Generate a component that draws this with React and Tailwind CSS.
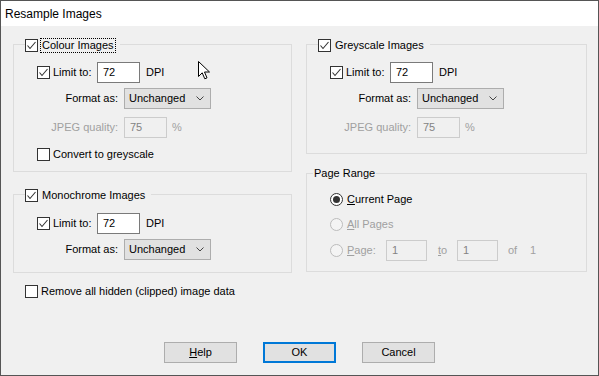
import React from "react";

function Check({ checked }) {
  return (
    <span className="relative inline-block w-[13px] h-[13px] shrink-0 border border-[#333333] bg-white">
      {checked && (
        <svg width="11" height="11" viewBox="0 0 11 11" className="absolute left-0 top-0">
          <polyline points="1.5,5.5 4,8.5 9.5,2" fill="none" stroke="#333333" strokeWidth="1.1" />
        </svg>
      )}
    </span>
  );
}

function Radio({ checked, disabled }) {
  return (
    <span
      className={
        "relative inline-flex items-center justify-center w-[13px] h-[13px] shrink-0 rounded-full border " +
        (disabled ? "border-[#bcbcbc] bg-[#f4f4f4]" : "border-[#333333] bg-white")
      }
    >
      {checked && <span className="block w-[7px] h-[7px] rounded-full bg-[#333333]" />}
    </span>
  );
}

function Input({ value, disabled, w = "w-[43px]" }) {
  return (
    <div
      className={
        "h-[21px] " + w + " flex items-center pl-[5px] border " +
        (disabled ? "border-[#cccccc] bg-[#f0f0f0] text-[#838383]" : "border-[#7a7a7a] bg-white text-black")
      }
    >
      {value}
    </div>
  );
}

function Select() {
  return (
    <div className="h-[21px] w-[87px] flex items-center justify-between pl-[4px] pr-[6px] border border-[#adadad] bg-[#e1e1e1]">
      <span>Unchanged</span>
      <svg width="8" height="5" viewBox="0 0 8 5">
        <polyline points="0.5,0.5 4,4 7.5,0.5" fill="none" stroke="#444" strokeWidth="1" />
      </svg>
    </div>
  );
}

function LimitRow() {
  return (
    <div className="flex items-center h-[21px] pl-[23px]">
      <Check checked />
      <span className="ml-[3px] w-[44px]">Limit to:</span>
      <Input value="72" />
      <span className="ml-[6px]">DPI</span>
    </div>
  );
}

function FormatRow({ mt }) {
  return (
    <div className={"flex items-center h-[21px] " + mt}>
      <span className="w-[104px] text-right">Format as:</span>
      <div className="ml-[6px]">
        <Select />
      </div>
    </div>
  );
}

function JpegRow() {
  return (
    <div className="flex items-center h-[21px] mt-[8px]">
      <span className="w-[104px] text-right text-[#a0a0a0]">JPEG quality:</span>
      <div className="ml-[6px]">
        <Input value="75" disabled />
      </div>
      <span className="ml-[5px] text-[#a0a0a0]">%</span>
    </div>
  );
}

function CheckTitle({ label, focus }) {
  return (
    <div className="absolute top-[-7px] left-[11px] flex items-center bg-[#f0f0f0] pr-[4px] h-[15px]">
      <Check checked />
      <span
        className={
          "ml-[2px] px-[1px] leading-[13px] " +
          (focus ? "border border-dotted border-black" : "border border-transparent")
        }
      >
        {label}
      </span>
    </div>
  );
}

export default function App() {
  return (
    <div className="w-[599px] h-[376px] flex flex-col border border-[#555555] font-['Liberation_Sans',Arial,sans-serif] text-[11px] text-black overflow-hidden">
      <div className="h-[25px] shrink-0 bg-white flex items-center pl-[4px] text-[12px]">Resample Images</div>
      <div className="relative flex-1 bg-[#f0f0f0] pt-[18px] pl-[12px]">
        <div className="flex gap-[14px]">
          {/* Left column */}
          <div className="w-[279px] flex flex-col">
            <div className="relative h-[128px] border border-[#dcdcdc]">
              <CheckTitle label="Colour Images" focus />
              <div className="pt-[17px]">
                <LimitRow />
                <FormatRow mt="mt-[5px]" />
                <JpegRow />
                <div className="flex items-center h-[13px] mt-[10px] pl-[23px]">
                  <Check />
                  <span className="ml-[3px]">Convert to greyscale</span>
                </div>
              </div>
            </div>
            <div className="relative h-[79px] mt-[22px] border border-[#dcdcdc]">
              <CheckTitle label="Monochrome Images" />
              <div className="pt-[18px]">
                <LimitRow />
                <FormatRow mt="mt-[5px]" />
              </div>
            </div>
          </div>
          {/* Right column */}
          <div className="w-[281px] flex flex-col">
            <div className="relative h-[110px] border border-[#dcdcdc]">
              <CheckTitle label="Greyscale Images" />
              <div className="pt-[17px]">
                <LimitRow />
                <FormatRow mt="mt-[5px]" />
                <JpegRow />
              </div>
            </div>
            <div className="relative h-[99px] mt-[19px] border border-[#dcdcdc]">
              <div className="absolute top-[-8px] left-[6px] bg-[#f0f0f0] px-[1px] leading-[15px]">Page Range</div>
              <div className="pt-[19px] pl-[23px]">
                <div className="flex items-center h-[13px]">
                  <Radio checked />
                  <span className="ml-[4px]">
                    <span className="underline">C</span>urrent Page
                  </span>
                </div>
                <div className="flex items-center h-[13px] mt-[12px] text-[#a0a0a0]">
                  <Radio disabled />
                  <span className="ml-[4px]">
                    <span className="underline">A</span>ll Pages
                  </span>
                </div>
                <div className="flex items-center h-[21px] mt-[9px] text-[#a0a0a0]">
                  <Radio disabled />
                  <span className="ml-[4px] w-[39px]">
                    <span className="underline">P</span>age:
                  </span>
                  <Input value="1" disabled w="w-[41px]" />
                  <span className="ml-[11px] w-[19px]">
                    <span className="underline">t</span>o
                  </span>
                  <Input value="1" disabled w="w-[41px]" />
                  <span className="ml-[10px] w-[22px]">of</span>
                  <span>1</span>
                </div>
              </div>
            </div>
          </div>
        </div>
        <div className="flex items-center h-[13px] mt-[12px] pl-[12px]">
          <Check />
          <span className="ml-[3px]">Remove all hidden (clipped) image data</span>
        </div>
        <div className="flex mt-[44px] pl-[151px] gap-[26px]">
          <div className="w-[73px] h-[21px] flex items-center justify-center border border-[#adadad] bg-[#e1e1e1]">
            <span>
              <span className="underline">H</span>elp
            </span>
          </div>
          <div className="w-[73px] h-[21px] flex items-center justify-center border-2 border-[#0078d7] bg-[#e1e1e1]">
            OK
          </div>
          <div className="w-[73px] h-[21px] flex items-center justify-center border border-[#adadad] bg-[#e1e1e1]">
            Cancel
          </div>
        </div>
        <svg
          width="13"
          height="20"
          viewBox="0 0 13 20"
          className="absolute left-[197px] top-[35px]"
        >
          <path
            d="M0.5,0.5 L0.5,15.5 L4.2,11.8 L6.8,17.8 L9,16.9 L6.5,11 L11.5,11 Z"
            fill="white"
            stroke="black"
            strokeWidth="1"
            strokeLinejoin="miter"
          />
        </svg>
      </div>
    </div>
  );
}
